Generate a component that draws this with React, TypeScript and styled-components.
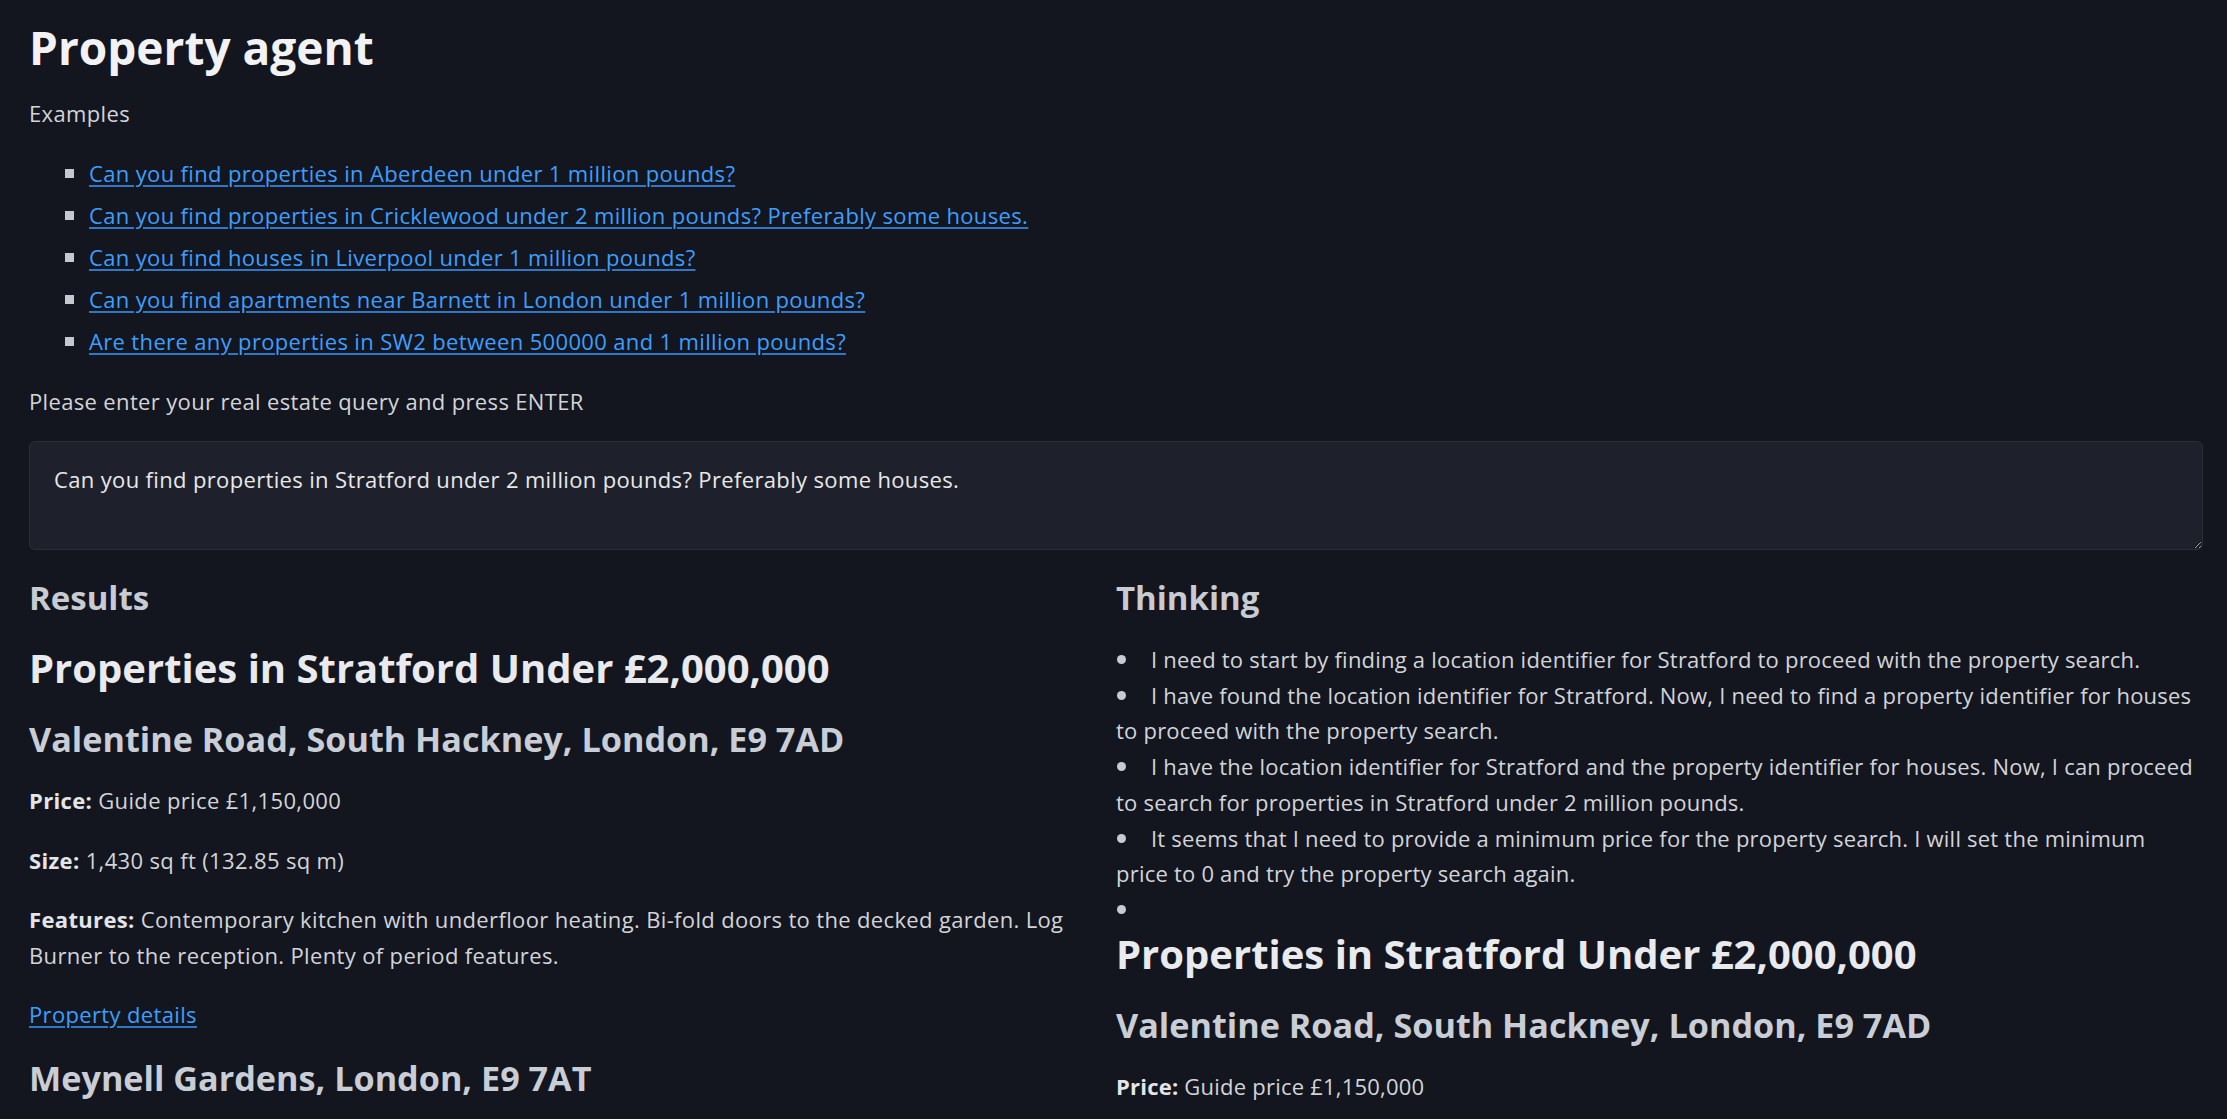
import React, { useState } from "react";
import styled, { createGlobalStyle } from "styled-components";

const GlobalStyle = createGlobalStyle`
  html, body {
    margin: 0;
    padding: 0;
    background: #13161e;
  }
  body {
    font-family: "Open Sans", "Noto Sans", "Liberation Sans", sans-serif;
    font-size: 22px;
    letter-spacing: 0.35px;
    line-height: 35.5px;
    color: #d2d4d9;
  }
`;

const Page = styled.div`
  padding: 18px 24px 0 29px;
`;

const Title = styled.h1`
  margin: 0;
  font-size: 46px;
  line-height: 58px;
  font-weight: 700;
  letter-spacing: 0;
  color: #f2f2f4;
`;

const Para = styled.p`
  margin: 0 0 24px;
`;

const Intro = styled.p`
  margin: 20px 0 20px;
`;

const ExampleList = styled.ul`
  margin: 0 0 22px;
  padding-left: 36px;
  list-style: none;

  li {
    line-height: 42px;
  }
  li::before {
    content: "";
    display: inline-block;
    width: 9px;
    height: 9px;
    margin-right: 15px;
    vertical-align: 4px;
    background: #c5c8cf;
  }
`;

const Link = styled.a`
  color: #3d9eff;
  text-decoration: underline;
  text-decoration-color: #2f78c8;
  text-decoration-thickness: 2px;
  text-underline-offset: 3px;
  cursor: pointer;
`;

const Query = styled.textarea`
  display: block;
  box-sizing: border-box;
  width: 100%;
  height: 109px;
  margin: 0 0 27px;
  padding: 20px 24px;
  background: #1e212b;
  border: 1px solid #2b2f3a;
  border-radius: 6px;
  color: #e8e8ea;
  font-family: inherit;
  font-size: 22px;
  letter-spacing: 0.35px;
  line-height: 35.5px;
  resize: vertical;
  outline: none;
`;

const Columns = styled.div`
  display: grid;
  grid-template-columns: 1fr 1fr;
`;

const Column = styled.section<{ $pad?: boolean }>`
  min-width: 0;
  padding-right: ${(p) => (p.$pad ? "24px" : "0")};
`;

const SectionTitle = styled.h3`
  margin: 0 0 24px;
  font-size: 33px;
  line-height: 41px;
  font-weight: 700;
  letter-spacing: 0;
  color: #c8cbd2;
`;

const ResultTitle = styled.h2`
  margin: 0 0 24px;
  font-size: 40px;
  line-height: 52px;
  font-weight: 700;
  letter-spacing: 0;
  color: #e9eaed;
`;

const Address = styled.h3`
  margin: 0 0 24px;
  font-size: 34.2px;
  line-height: 41px;
  font-weight: 700;
  letter-spacing: 0;
  color: #c9cdd5;
`;

const Label = styled.strong`
  font-weight: 700;
  color: #e4e5e8;
`;

const Steps = styled.ul`
  margin: 0;
  padding: 0;
  list-style: none;
  letter-spacing: 0.22px;

  li {
    line-height: 35.7px;
  }
  li::before {
    content: "";
    display: inline-block;
    width: 9px;
    height: 9px;
    border-radius: 50%;
    margin: 0 25px 0 1px;
    vertical-align: 4px;
    background: #c8cbd2;
  }
`;

const examples = [
  "Can you find properties in Aberdeen under 1 million pounds?",
  "Can you find properties in Cricklewood under 2 million pounds? Preferably some houses.",
  "Can you find houses in Liverpool under 1 million pounds?",
  "Can you find apartments near Barnett in London under 1 million pounds?",
  "Are there any properties in SW2 between 500000 and 1 million pounds?",
];

const steps = [
  "I need to start by finding a location identifier for Stratford to proceed with the property search.",
  "I have found the location identifier for Stratford. Now, I need to find a property identifier for houses to proceed with the property search.",
  "I have the location identifier for Stratford and the property identifier for houses. Now, I can proceed to search for properties in Stratford under 2 million pounds.",
  "It seems that I need to provide a minimum price for the property search. I will set the minimum price to 0 and try the property search again.",
];

function Listing() {
  return (
    <>
      <ResultTitle>Properties in Stratford Under £2,000,000</ResultTitle>
      <Address>Valentine Road, South Hackney, London, E9 7AD</Address>
      <Para>
        <Label>Price:</Label> Guide price £1,150,000
      </Para>
      <Para>
        <Label>Size:</Label> 1,430 sq ft (132.85 sq m)
      </Para>
      <Para>
        <Label>Features:</Label> Contemporary kitchen with underfloor heating. Bi-fold doors to the
        decked garden. Log Burner to the reception. Plenty of period features.
      </Para>
      <Para>
        <Link>Property details</Link>
      </Para>
      <Address>Meynell Gardens, London, E9 7AT</Address>
    </>
  );
}

export default function App() {
  const [query, setQuery] = useState(
    "Can you find properties in Stratford under 2 million pounds? Preferably some houses."
  );

  return (
    <Page>
      <GlobalStyle />
      <Title>Property agent</Title>
      <Intro>Examples</Intro>
      <ExampleList>
        {examples.map((e) => (
          <li key={e}>
            <Link onClick={() => setQuery(e)}>{e}</Link>
          </li>
        ))}
      </ExampleList>
      <Para style={{ marginBottom: 22 }}>Please enter your real estate query and press ENTER</Para>
      <Query value={query} onChange={(e) => setQuery(e.target.value)} />
      <Columns>
        <Column $pad>
          <SectionTitle>Results</SectionTitle>
          <Listing />
        </Column>
        <Column>
          <SectionTitle>Thinking</SectionTitle>
          <Steps>
            {steps.map((s) => (
              <li key={s}>{s}</li>
            ))}
            <li>
              <Listing />
            </li>
          </Steps>
        </Column>
      </Columns>
    </Page>
  );
}
